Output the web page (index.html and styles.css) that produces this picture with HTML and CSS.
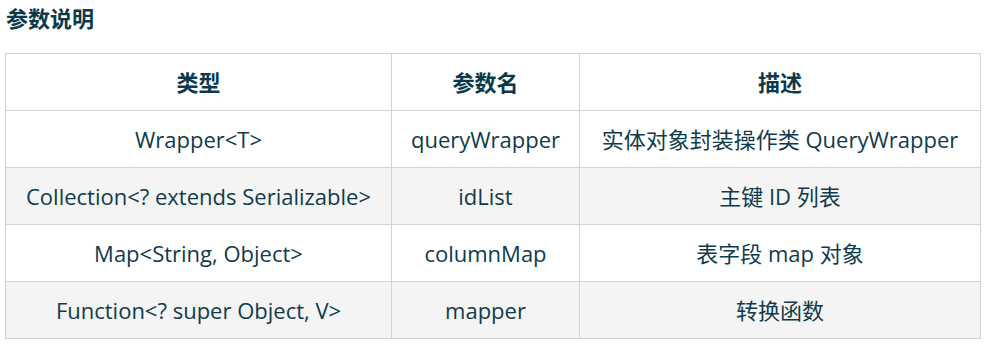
FILE: index.html
```html
<!DOCTYPE html>
<html lang="zh-CN">
<head>
<meta charset="utf-8">
<title>参数说明</title>
<link rel="stylesheet" href="styles.css">
</head>
<body>
<div class="page">
  <h3 class="title">参数说明</h3>
  <table class="params">
    <colgroup>
      <col class="c1">
      <col class="c2">
      <col class="c3">
    </colgroup>
    <thead>
      <tr><th>类型</th><th>参数名</th><th>描述</th></tr>
    </thead>
    <tbody>
      <tr><td>Wrapper&lt;T&gt;</td><td>queryWrapper</td><td>实体对象封装操作类 QueryWrapper</td></tr>
      <tr class="alt"><td>Collection&lt;? extends Serializable&gt;</td><td>idList</td><td>主键 ID 列表</td></tr>
      <tr><td>Map&lt;String, Object&gt;</td><td>columnMap</td><td>表字段 map 对象</td></tr>
      <tr class="alt"><td>Function&lt;? super Object, V&gt;</td><td>mapper</td><td>转换函数</td></tr>
    </tbody>
  </table>
</div>
</body>
</html>
```
FILE: styles.css
```css
html, body {
  margin: 0;
  padding: 0;
  background: #ffffff;
}
body {
  font-family: "Open Sans", "Noto Sans CJK SC", sans-serif;
  color: #0f3b4c;
}
.page {
  padding: 0 5px;
}
.title {
  margin: 0;
  padding-left: 1px;
  font-size: 22px;
  line-height: 36px;
  font-weight: 700;
  color: #0b3a4b;
}
.params {
  margin-top: 17px;
  width: 975px;
  border-collapse: collapse;
  table-layout: fixed;
  font-size: 22px;
}
.c1 { width: 386px; }
.c2 { width: 188px; }
.c3 { width: 401px; }
.params th,
.params td {
  border: 1px solid #d2d2d2;
  padding: 12px 4px;
  line-height: 32px;
  text-align: center;
  white-space: nowrap;
}
.params th {
  font-weight: 700;
  color: #0b3a4b;
}
.params td {
  font-weight: 400;
}
.params tr.alt td {
  background: #f4f4f4;
}
```
